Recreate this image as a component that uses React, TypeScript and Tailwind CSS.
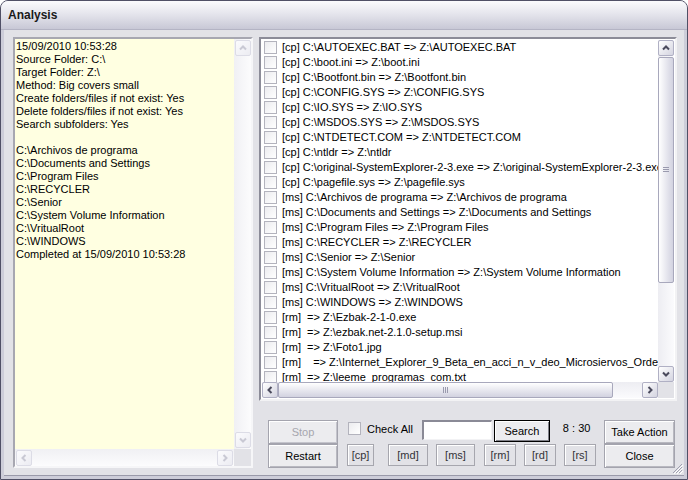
import React from 'react';

const logLines = [
  '15/09/2010 10:53:28',
  'Source Folder: C:\\',
  'Target Folder: Z:\\',
  'Method: Big covers small',
  'Create folders/files if not exist: Yes',
  'Delete folders/files if not exist: Yes',
  'Search subfolders: Yes',
  '',
  'C:\\Archivos de programa',
  'C:\\Documents and Settings',
  'C:\\Program Files',
  'C:\\RECYCLER',
  'C:\\Senior',
  'C:\\System Volume Information',
  'C:\\VritualRoot',
  'C:\\WINDOWS',
  'Completed at 15/09/2010 10:53:28',
];

const actions = [
  '[cp] C:\\AUTOEXEC.BAT => Z:\\AUTOEXEC.BAT',
  '[cp] C:\\boot.ini => Z:\\boot.ini',
  '[cp] C:\\Bootfont.bin => Z:\\Bootfont.bin',
  '[cp] C:\\CONFIG.SYS => Z:\\CONFIG.SYS',
  '[cp] C:\\IO.SYS => Z:\\IO.SYS',
  '[cp] C:\\MSDOS.SYS => Z:\\MSDOS.SYS',
  '[cp] C:\\NTDETECT.COM => Z:\\NTDETECT.COM',
  '[cp] C:\\ntldr => Z:\\ntldr',
  '[cp] C:\\original-SystemExplorer-2-3.exe => Z:\\original-SystemExplorer-2-3.exe',
  '[cp] C:\\pagefile.sys => Z:\\pagefile.sys',
  '[ms] C:\\Archivos de programa => Z:\\Archivos de programa',
  '[ms] C:\\Documents and Settings => Z:\\Documents and Settings',
  '[ms] C:\\Program Files => Z:\\Program Files',
  '[ms] C:\\RECYCLER => Z:\\RECYCLER',
  '[ms] C:\\Senior => Z:\\Senior',
  '[ms] C:\\System Volume Information => Z:\\System Volume Information',
  '[ms] C:\\VritualRoot => Z:\\VritualRoot',
  '[ms] C:\\WINDOWS => Z:\\WINDOWS',
  '[rm]  => Z:\\Ezbak-2-1-0.exe',
  '[rm]  => Z:\\ezbak.net-2.1.0-setup.msi',
  '[rm]  => Z:\\Foto1.jpg',
  '[rm]    => Z:\\Internet_Explorer_9_Beta_en_acci_n_v_deo_Microsiervos_Ordenador.exe',
  '[rm]  => Z:\\leeme_programas_com.txt',
];

type Dir = 'up' | 'down' | 'left' | 'right';

// Small chevron used on scrollbar buttons
function Chevron({ dir, color }: { dir: Dir; color: string }) {
  const pts = {
    up: '1,5.5 4,2.5 7,5.5',
    down: '1,2.5 4,5.5 7,2.5',
    left: '5.5,1 2.5,4 5.5,7',
    right: '2.5,1 5.5,4 2.5,7',
  }[dir];
  return (
    <svg width="8" height="8" viewBox="0 0 8 8">
      <polyline points={pts} fill="none" stroke={color} strokeWidth="2" />
    </svg>
  );
}

function ScrollBtn({ dir, disabled = false }: { dir: Dir; disabled?: boolean }) {
  return (
    <div
      className={
        disabled
          ? 'flex items-center justify-center w-[16px] h-[16px] shrink-0 rounded-[2px] border border-[#dcdce6] bg-gradient-to-br from-[#fbfbfd] to-[#ececf2]'
          : 'flex items-center justify-center w-[16px] h-[16px] shrink-0 rounded-[2px] border border-[#b0b0c4] bg-gradient-to-br from-white to-[#d4d4e0]'
      }
    >
      <Chevron dir={dir} color={disabled ? '#c9c9d4' : '#4a4a5c'} />
    </div>
  );
}

function Checkbox() {
  return (
    <div className="w-[13px] h-[13px] shrink-0 border border-[#b3b3bd] bg-gradient-to-br from-[#ececef] to-white" />
  );
}

function Button({ children, disabled = false, isDefault = false }: { children: React.ReactNode; disabled?: boolean; isDefault?: boolean }) {
  return (
    <div
      className={
        isDefault
          ? 'flex items-center justify-center h-full w-full border border-black bg-[#ececef] shadow-[inset_1px_1px_0_#ffffff,inset_-1px_-1px_0_#808088] text-black'
          : disabled
          ? 'flex items-center justify-center h-full w-full border border-[#a4a4ae] bg-[#ececef] shadow-[inset_1px_1px_0_#ffffff,inset_-1px_-1px_0_#c4c4cc] text-[#a6a6ae]'
          : 'flex items-center justify-center h-full w-full border border-[#a4a4ae] bg-[#ececef] shadow-[inset_1px_1px_0_#ffffff,inset_-1px_-1px_0_#b8b8c0] text-black'
      }
    >
      {children}
    </div>
  );
}

function FilterBtn({ label, w, ml }: { label: string; w: string; ml: string }) {
  return (
    <div className={`${w} ${ml} h-[22px] flex items-center justify-center border border-[#a6a6ae] shadow-[inset_1px_1px_0_#ffffff] text-[#333338]`}>
      {label}
    </div>
  );
}

export default function App() {
  return (
    <div className="w-[688px] h-[480px] flex flex-col rounded-t-[8px] border border-[#505066] bg-[#cdcdd9] overflow-hidden font-['Liberation_Sans',Arial,sans-serif] text-[11px] leading-[13px]">
      {/* Title bar */}
      <div className="h-[29px] shrink-0 flex items-center pl-[7px] bg-gradient-to-b from-[#fbfbfd] via-[#e3e3eb] to-[#c8c8d6] border-b border-[#b4b4c4]">
        <span className="text-[12px] font-bold text-[#1a1a1a]">Analysis</span>
      </div>

      {/* Body */}
      <div className="flex-1 mx-[3px] mb-[3px] bg-[#e2e2e7] border-b border-[#9a9aaa] relative flex pl-[9px] pt-[7px]">
        {/* Left log panel */}
        <div className="w-[240px] h-[431px] border-2 border-t-[#a7a7b1] border-l-[#a7a7b1] border-b-[#f6f6f8] border-r-[#f6f6f8] flex flex-col bg-[#e2e2e7]">
          <div className="flex-1 flex min-h-0">
            <div className="flex-1 bg-[#ffffe1] pl-[1px] pt-[1px] text-black overflow-hidden">
              {logLines.map((l, i) => (
                <div key={i} className="h-[13px] whitespace-pre">
                  {l}
                </div>
              ))}
            </div>
            <div className="w-[17px] flex flex-col items-center p-px bg-gradient-to-r from-[#f0f0f4] to-[#fcfcfd]">
              <ScrollBtn dir="up" disabled />
              <div className="flex-1" />
              <ScrollBtn dir="down" disabled />
            </div>
          </div>
          <div className="h-[17px] flex">
            <div className="flex-1 flex items-center p-px bg-gradient-to-b from-[#f0f0f4] to-[#fcfcfd]">
              <ScrollBtn dir="left" disabled />
              <div className="flex-1" />
              <ScrollBtn dir="right" disabled />
            </div>
            <div className="w-[17px] bg-[#e2e2e7]" />
          </div>
        </div>

        {/* Right column */}
        <div className="ml-[6px] w-[418px] flex flex-col">
          {/* Action list */}
          <div className="h-[364px] border-2 border-t-[#8c8c98] border-l-[#8c8c98] border-b-[#f2f2f4] border-r-[#f2f2f4] bg-white flex flex-col p-px">
            <div className="flex-1 flex min-h-0">
              <div className="flex-1 overflow-hidden">
                {actions.map((a, i) => (
                  <div key={i} className="h-[15px] flex items-center">
                    <div className="ml-[2px]">
                      <Checkbox />
                    </div>
                    <span className="ml-[5px] whitespace-pre text-black">{a}</span>
                  </div>
                ))}
              </div>
              <div className="w-[16px] flex flex-col bg-gradient-to-r from-[#ededf2] to-[#fbfbfd]">
                <ScrollBtn dir="up" />
                <div className="mt-px h-[226px] rounded-[2px] border border-[#a8a8bc] bg-gradient-to-r from-white to-[#d2d2e0] flex items-center justify-center">
                  <svg width="6" height="6" viewBox="0 0 6 6">
                    <path d="M0 0.5H6M0 2.5H6M0 4.5H6" stroke="#9a9aae" strokeWidth="1" />
                  </svg>
                </div>
                <div className="flex-1" />
                <ScrollBtn dir="down" />
              </div>
            </div>
            <div className="h-[16px] flex">
              <div className="flex-1 flex bg-gradient-to-b from-[#ededf2] to-[#fbfbfd]">
                <ScrollBtn dir="left" />
                <div className="h-full w-[335px] rounded-[2px] border border-[#a8a8bc] bg-gradient-to-b from-white to-[#d2d2e0] flex items-center justify-center">
                  <svg width="6" height="6" viewBox="0 0 6 6">
                    <path d="M0.5 0V6M2.5 0V6M4.5 0V6" stroke="#9a9aae" strokeWidth="1" />
                  </svg>
                </div>
                <div className="flex-1" />
                <ScrollBtn dir="right" />
              </div>
              <div className="w-[16px] bg-[#e2e2e7]" />
            </div>
          </div>

          {/* Controls */}
          <div className="mt-[19px] flex">
            <div className="ml-[9px] w-[70px] flex flex-col">
              <div className="h-[24px]">
                <Button disabled>Stop</Button>
              </div>
              <div className="h-[24px]">
                <Button>Restart</Button>
              </div>
            </div>

            <div className="ml-[9px] w-[249px] flex flex-col">
              <div className="h-[24px] flex items-start">
                <div className="ml-[1px] mt-[2px]">
                  <Checkbox />
                </div>
                <span className="ml-[6px] mt-[2px] text-black leading-[14px]">Check All</span>
                <div className="ml-[9px] w-[70px] h-[20px] bg-white border-t-2 border-l-2 border-t-[#8a8a96] border-l-[#8a8a96] border-b border-r border-b-[#f2f2f4] border-r-[#f2f2f4]" />
                <div className="ml-[2px] w-[56px] h-[22px]">
                  <Button isDefault>Search</Button>
                </div>
                <span className="ml-[13px] mt-[1px] text-black leading-[14px] whitespace-pre">8 : 30</span>
              </div>
              <div className="flex">
                <FilterBtn label="[cp]" w="w-[27px]" ml="ml-0" />
                <FilterBtn label="[md]" w="w-[40px]" ml="ml-[14px]" />
                <FilterBtn label="[ms]" w="w-[39px]" ml="ml-[8px]" />
                <FilterBtn label="[rm]" w="w-[32px]" ml="ml-[9px]" />
                <FilterBtn label="[rd]" w="w-[32px]" ml="ml-[8px]" />
                <FilterBtn label="[rs]" w="w-[32px]" ml="ml-[8px]" />
              </div>
            </div>

            <div className="ml-[8px] w-[71px] flex flex-col">
              <div className="h-[24px]">
                <Button>Take Action</Button>
              </div>
              <div className="h-[24px]">
                <Button>Close</Button>
              </div>
            </div>
          </div>
        </div>

        {/* Resize grip */}
        <svg className="absolute right-[1px] bottom-[1px]" width="12" height="12" viewBox="0 0 12 12">
          <path d="M11 2L2 11M11 5L5 11M11 8L8 11" stroke="#a0a0b0" strokeWidth="1" />
          <path d="M12 3L3 12M12 6L6 12M12 9L9 12" stroke="#ffffff" strokeWidth="1" />
        </svg>
      </div>
    </div>
  );
}
